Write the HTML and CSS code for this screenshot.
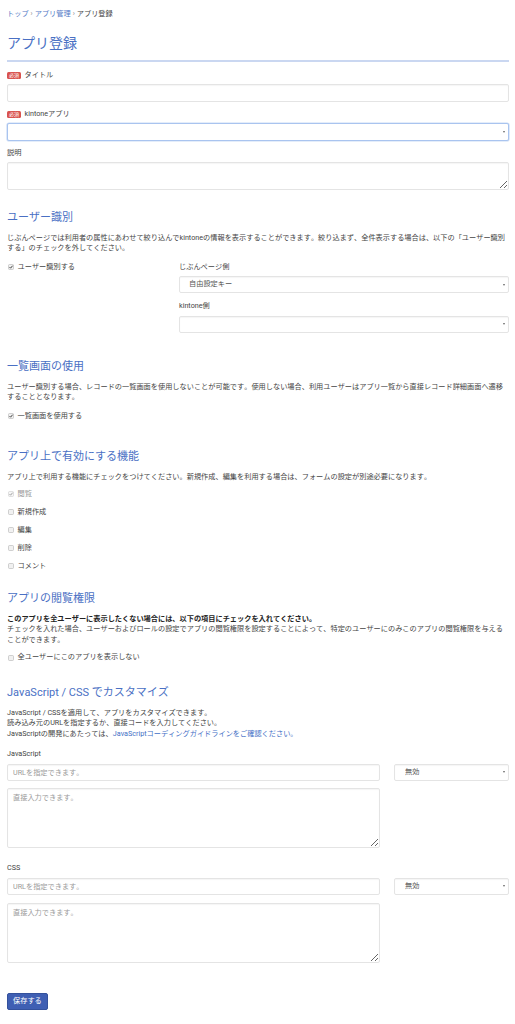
FILE: index.html
```html
<!DOCTYPE html>
<html lang="ja">
<head>
<meta charset="utf-8">
<title>アプリ登録</title>
<link rel="stylesheet" href="styles.css">
</head>
<body>
<div class="page">
  <nav class="crumb"><a class="crumb-link">トップ</a><span class="sep">›</span><a class="crumb-link">アプリ管理</a><span class="sep">›</span><span class="crumb-cur">アプリ登録</span></nav>
  <h1 class="title">アプリ登録</h1>

  <div class="basic">
    <div class="field">
      <label class="lbl"><span class="req">必須</span>タイトル</label>
      <input class="ctl" type="text">
    </div>
    <div class="field">
      <label class="lbl"><span class="req">必須</span>kintoneアプリ</label>
      <div class="sel"><select class="ctl ctl-focus"><option></option></select></div>
    </div>
    <div class="field last">
      <label class="lbl">説明</label>
      <textarea class="ctl area-sm"></textarea>
    </div>
  </div>

  <section class="sec sec-user">
    <h2 class="sec-title">ユーザー識別</h2>
    <p class="desc">じぶんページでは利用者の属性にあわせて絞り込んでkintoneの情報を表示することができます。絞り込まず、全件表示する場合は、以下の「ユーザー識別する」のチェックを外してください。</p>
    <div class="urow">
      <label class="chk"><svg class="cb" viewBox="0 0 6 6" width="6" height="6"><rect x="0.5" y="0.5" width="5" height="5" rx="1" fill="#f1f1f1" stroke="#b3b3b3" stroke-width="0.6"/><path d="M1.5 3.1 L2.6 4.2 L4.6 1.7" fill="none" stroke="#333" stroke-width="0.9"/></svg>ユーザー識別する</label>
      <div class="ucol">
        <div class="lbl">じぶんページ側</div>
        <div class="sel sel-u"><select class="ctl ctl-s pad-sel"><option>自由設定キー</option></select></div>
        <div class="lbl lbl-2">kintone側</div>
        <div class="sel sel-u"><select class="ctl ctl-s pad-sel"><option></option></select></div>
      </div>
    </div>
  </section>

  <section class="sec sec-list">
    <h2 class="sec-title">一覧画面の使用</h2>
    <p class="desc">ユーザー識別する場合、レコードの一覧画面を使用しないことが可能です。使用しない場合、利用ユーザーはアプリ一覧から直接レコード詳細画面へ遷移することとなります。</p>
    <label class="chk chk-gap"><svg class="cb" viewBox="0 0 6 6" width="6" height="6"><rect x="0.5" y="0.5" width="5" height="5" rx="1" fill="#f1f1f1" stroke="#b3b3b3" stroke-width="0.6"/><path d="M1.5 3.1 L2.6 4.2 L4.6 1.7" fill="none" stroke="#333" stroke-width="0.9"/></svg>一覧画面を使用する</label>
  </section>

  <section class="sec sec-func">
    <h2 class="sec-title">アプリ上で有効にする機能</h2>
    <p class="desc">アプリ上で利用する機能にチェックをつけてください。新規作成、編集を利用する場合は、フォームの設定が別途必要になります。</p>
    <div class="chk-list">
      <label class="chk chk-dis"><svg class="cb" viewBox="0 0 6 6" width="6" height="6"><rect x="0.5" y="0.5" width="5" height="5" rx="1" fill="#f6f6f6" stroke="#cfcfcf" stroke-width="0.6"/><path d="M1.5 3.1 L2.6 4.2 L4.6 1.7" fill="none" stroke="#9a9a9a" stroke-width="0.9"/></svg>閲覧</label>
      <label class="chk"><svg class="cb" viewBox="0 0 6 6" width="6" height="6"><rect x="0.5" y="0.5" width="5" height="5" rx="1" fill="#f1f1f1" stroke="#b3b3b3" stroke-width="0.6"/></svg>新規作成</label>
      <label class="chk"><svg class="cb" viewBox="0 0 6 6" width="6" height="6"><rect x="0.5" y="0.5" width="5" height="5" rx="1" fill="#f1f1f1" stroke="#b3b3b3" stroke-width="0.6"/></svg>編集</label>
      <label class="chk"><svg class="cb" viewBox="0 0 6 6" width="6" height="6"><rect x="0.5" y="0.5" width="5" height="5" rx="1" fill="#f1f1f1" stroke="#b3b3b3" stroke-width="0.6"/></svg>削除</label>
      <label class="chk"><svg class="cb" viewBox="0 0 6 6" width="6" height="6"><rect x="0.5" y="0.5" width="5" height="5" rx="1" fill="#f1f1f1" stroke="#b3b3b3" stroke-width="0.6"/></svg>コメント</label>
    </div>
  </section>

  <section class="sec sec-perm">
    <h2 class="sec-title">アプリの閲覧権限</h2>
    <p class="desc"><strong class="strong">このアプリを全ユーザーに表示したくない場合には、以下の項目にチェックを入れてください。</strong><br>チェックを入れた場合、ユーザーおよびロールの設定でアプリの閲覧権限を設定することによって、特定のユーザーにのみこのアプリの閲覧権限を与えることができます。</p>
    <label class="chk chk-gap"><svg class="cb" viewBox="0 0 6 6" width="6" height="6"><rect x="0.5" y="0.5" width="5" height="5" rx="1" fill="#f1f1f1" stroke="#b3b3b3" stroke-width="0.6"/></svg>全ユーザーにこのアプリを表示しない</label>
  </section>

  <section class="sec sec-code">
    <h2 class="sec-title">JavaScript / CSS でカスタマイズ</h2>
    <p class="desc">JavaScript / CSSを適用して、アプリをカスタマイズできます。<br>読み込み元のURLを指定するか、直接コードを入力してください。<br>JavaScriptの開発にあたっては、<a class="link">JavaScriptコーディングガイドラインをご確認ください。</a></p>

    <div class="lbl code-lbl">JavaScript</div>
    <div class="code-row">
      <input class="ctl ctl-url" type="text" placeholder="URLを指定できます。">
      <div class="sel"><select class="ctl ctl-url pad-sel2"><option>無効</option></select></div>
      <textarea class="ctl area-lg" placeholder="直接入力できます。"></textarea>
    </div>

    <div class="lbl code-lbl code-lbl-2">CSS</div>
    <div class="code-row code-row-2">
      <input class="ctl ctl-url" type="text" placeholder="URLを指定できます。">
      <div class="sel"><select class="ctl ctl-url pad-sel2"><option>無効</option></select></div>
      <textarea class="ctl area-lg" placeholder="直接入力できます。"></textarea>
    </div>
  </section>

  <button class="btn" type="button">保存する</button>
</div>
</body>
</html>
```

FILE: styles.css
```css
html, body {
  margin: 0;
  padding: 0;
  background: #fff;
}

.page {
  padding: 9px 6px 20px 7px;
  font-family: Roboto, "Noto Sans CJK JP", sans-serif;
  font-size: 7.2px;
  line-height: 10.4px;
  color: #444;
  font-kerning: none;
  text-spacing-trim: space-all;
}

.crumb {
  display: flex;
  align-items: center;
  line-height: 10.4px;
}
.crumb-link {
  color: #5479c6;
}
.sep {
  color: #888;
  padding: 0 2px;
  font-size: 7px;
}
.crumb-cur {
  color: #444;
}

.title {
  margin: 14px 0 0;
  font-size: 14px;
  line-height: 20px;
  font-weight: normal;
  color: #4a70c4;
  padding-bottom: 6.5px;
  border-bottom: 2px solid #cad7f1;
}

.basic {
  margin-top: 8.5px;
}

.field {
  margin-bottom: 7px;
}
.field.last {
  margin-bottom: 0;
}

.lbl {
  display: flex;
  align-items: center;
  gap: 3.5px;
  margin-bottom: 3.4px;
  color: #444;
}

.req {
  display: inline-block;
  background: #d9534f;
  color: #fff;
  font-size: 5px;
  line-height: 7px;
  padding: 0 2px;
  border-radius: 1.5px;
}

.ctl {
  display: block;
  width: 100%;
  height: 18px;
  box-sizing: border-box;
  margin: 0;
  border: 1px solid #e4e4e4;
  border-radius: 2px;
  box-shadow: inset 0 1px 1px rgba(0, 0, 0, 0.04);
  background: #fff;
  font: inherit;
  color: #555;
  padding: 0 5px;
  outline: none;
}
.ctl::placeholder {
  color: #9a9a9a;
}
select.ctl {
  appearance: none;
  -webkit-appearance: none;
}
.ctl-focus {
  border-color: #a9c4ef;
  box-shadow: 0 0 0 0.6px #cadbf6;
}

.sel {
  position: relative;
}
.sel::after {
  content: "";
  position: absolute;
  right: 4px;
  top: 50%;
  margin-top: -1px;
  border-left: 1.5px solid transparent;
  border-right: 1.5px solid transparent;
  border-top: 2px solid #666;
}

textarea.ctl {
  resize: vertical;
  padding: 4px 5px;
}
.area-sm {
  height: 28.5px;
}
.area-lg {
  height: 60px;
  grid-column: 1;
}

.sec-title {
  margin: 0;
  font-size: 11px;
  line-height: 16px;
  font-weight: normal;
  color: #4a70c4;
}
.desc {
  margin: 7px 0 0;
}
.strong {
  font-weight: bold;
  color: #222;
}
.link {
  color: #3f6fc6;
}

.sec-user { margin-top: 19.6px; }
.sec-user .desc { margin-top: 6.8px; }
.sec-list { margin-top: 26.4px; }
.sec-func { margin-top: 28px; }
.sec-perm { margin-top: 19.8px; }
.sec-code { margin-top: 21.8px; }
.sec-code .desc { margin-top: 7.4px; }

.urow {
  margin-top: 8.2px;
  display: grid;
  grid-template-columns: 158px 1fr;
  column-gap: 14px;
  align-items: start;
}
.ucol .lbl {
  margin-bottom: 4px;
}
.ucol .lbl-2 {
  margin-top: 8px;
}
.ctl-s {
  height: 17px;
}
.pad-sel {
  padding-left: 9px;
}
.pad-sel2 {
  padding-left: 10px;
}

.chk {
  display: flex;
  align-items: center;
  gap: 4px;
  line-height: 10.4px;
}
.cb {
  display: block;
  flex: none;
  margin-left: 0.5px;
}
.chk-gap {
  margin-top: 7.9px;
}
.sec-perm .chk-gap {
  margin-top: 7.2px;
}
.chk-dis {
  color: #999;
}
.chk-list {
  margin-top: 6.4px;
  display: flex;
  flex-direction: column;
  gap: 7.6px;
}

.code-lbl {
  margin: 9.5px 0 0;
}
.code-lbl-2 {
  margin-top: 14.8px;
}
.code-row {
  margin-top: 5px;
  display: grid;
  grid-template-columns: 373px 1fr;
  column-gap: 14px;
  row-gap: 7.5px;
}
.code-row-2 {
  margin-top: 4.8px;
  row-gap: 8.4px;
}
.ctl-url {
  height: 16.5px;
}

.btn {
  display: block;
  margin-top: 29.6px;
  height: 17px;
  padding: 0 5px;
  background: #3f5fb3;
  color: #fff;
  border: 1px solid #34519c;
  border-radius: 2px;
  font: inherit;
  cursor: pointer;
}
```
